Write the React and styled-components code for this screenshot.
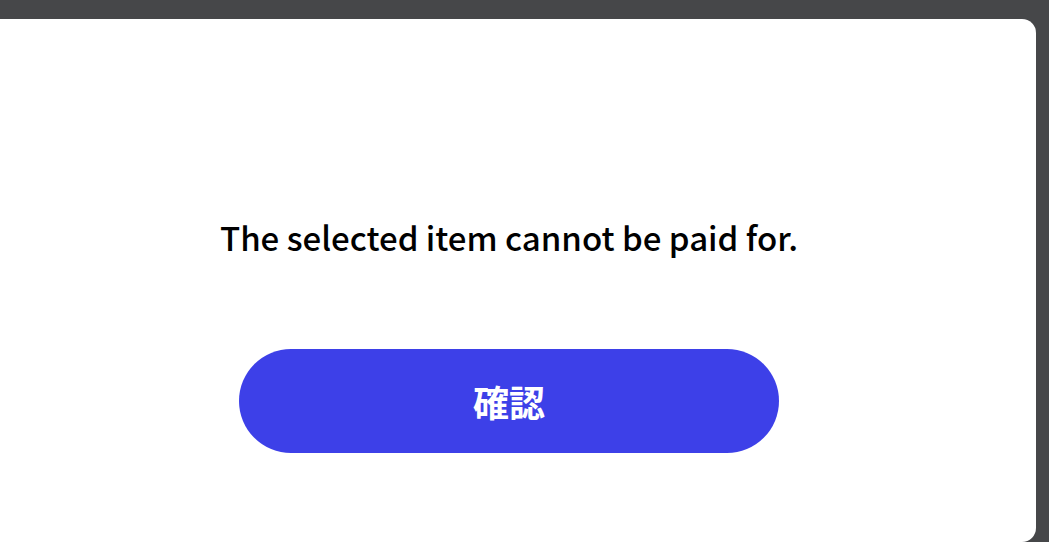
import React from "react";
import styled, { createGlobalStyle } from "styled-components";

const Global = createGlobalStyle`
  html, body { margin: 0; padding: 0; }
  body {
    background: #464749;
    font-family: "Noto Sans CJK JP", "Noto Sans", sans-serif;
    overflow: hidden;
  }
`;

const Screen = styled.div`
  width: 1049px;
  height: 542px;
  padding-top: 19px;
  box-sizing: border-box;
`;

const Dialog = styled.div`
  margin-left: -18px;
  width: 1054px;
  height: 523px;
  background: #ffffff;
  border-radius: 14px;
  box-sizing: border-box;
  padding-top: 195px;
  display: flex;
  flex-direction: column;
  align-items: center;
`;

const Message = styled.p`
  margin: 0;
  font-size: 33px;
  line-height: 46px;
  color: #000;
  font-weight: 500;
`;

const ConfirmButton = styled.button`
  margin-top: 89px;
  width: 540px;
  height: 104px;
  border: none;
  border-radius: 52px;
  background: #3d40e8;
  color: #fff;
  font-family: "Noto Sans CJK JP", sans-serif;
  font-size: 36px;
  font-weight: 700;
  cursor: pointer;
`;

export default function App() {
  return (
    <>
      <Global />
      <Screen>
        <Dialog>
          <Message>The selected item cannot be paid for.</Message>
          <ConfirmButton>確認</ConfirmButton>
        </Dialog>
      </Screen>
    </>
  );
}
